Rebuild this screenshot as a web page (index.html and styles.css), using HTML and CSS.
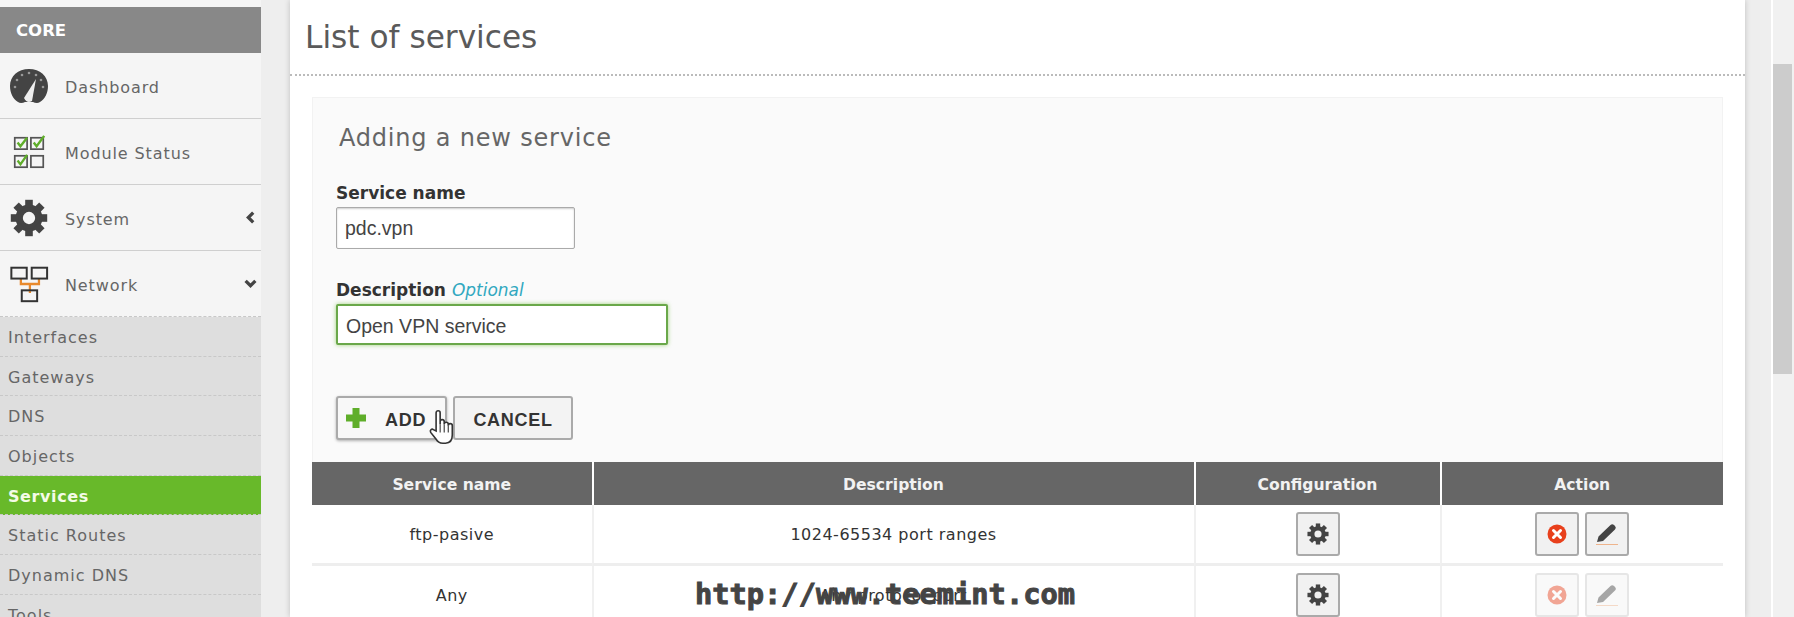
FILE: index.html
```html
<!DOCTYPE html>
<html>
<head>
  <title>List of services</title>
  <link rel="stylesheet" href="styles.css">
</head>
<body>
  <svg class="defs" width="0" height="0">
    <symbol id="gear" viewBox="0 0 24 24">
      <circle cx="12" cy="12" r="6.200" fill="none" stroke="currentColor" stroke-width="4.600"/>
      <g fill="currentColor">
        <rect x="9.600" y="0.500" width="4.800" height="5"/>
        <rect x="9.600" y="0.500" width="4.800" height="5" transform="rotate(45 12 12)"/>
        <rect x="9.600" y="0.500" width="4.800" height="5" transform="rotate(90 12 12)"/>
        <rect x="9.600" y="0.500" width="4.800" height="5" transform="rotate(135 12 12)"/>
        <rect x="9.600" y="0.500" width="4.800" height="5" transform="rotate(180 12 12)"/>
        <rect x="9.600" y="0.500" width="4.800" height="5" transform="rotate(225 12 12)"/>
        <rect x="9.600" y="0.500" width="4.800" height="5" transform="rotate(270 12 12)"/>
        <rect x="9.600" y="0.500" width="4.800" height="5" transform="rotate(315 12 12)"/>
      </g>
    </symbol>
    <symbol id="del" viewBox="0 0 20 20">
      <circle cx="10" cy="10" r="9.500" fill="#e8401c"/>
      <path d="M6.500 6.500l7 7M13.500 6.500l-7 7" stroke="#fff" stroke-width="3" stroke-linecap="round"/>
    </symbol>
    <symbol id="pencil" viewBox="0 0 24 24">
      <path d="M2 20l1.500-5.500L15.500 3a2.500 2.500 0 0 1 3.500 0l1 1a2.500 2.500 0 0 1 0 3.500L8 19z" fill="#444"/>
      <path d="M1 22.500h22" stroke="#eeb48c" stroke-width="1"/>
    </symbol>
  </svg>

  <aside class="sidebar">
    <div class="side-title">CORE</div>
    <a class="side-item">
      <svg class="side-icon" viewBox="0 0 40 36">
        <path d="M20 1C9 1 1 8 1 18c0 7 3 13 8 16 2 1.500 5 1 7 0h8c2 1 5 1.500 7 0 5-3 8-9 8-16C39 8 31 1 20 1z" fill="#444"/>
        <path d="M15 30l12-19-4 22q-5 3-8-3z" fill="#eee"/>
        <g fill="#999">
          <circle cx="6" cy="19" r="1.300"/><circle cx="8" cy="12" r="1.300"/><circle cx="13" cy="7" r="1.300"/>
          <circle cx="20" cy="5" r="1.300"/><circle cx="27" cy="7" r="1.300"/><circle cx="32" cy="12" r="1.300"/><circle cx="34" cy="19" r="1.300"/>
        </g>
      </svg>
      <span>Dashboard</span>
    </a>
    <a class="side-item">
      <svg class="side-icon" viewBox="0 0 40 40">
        <g fill="none" stroke="#555" stroke-width="1.800">
          <rect x="5" y="5" width="13" height="12"/><rect x="22" y="5" width="13" height="12"/>
          <rect x="5" y="24" width="13" height="12"/><rect x="22" y="24" width="13" height="12"/>
        </g>
        <path d="M8 10l3 4 7-9M25 10l3 4 8-11M8 29l3 4 7-10" fill="none" stroke="#5fae2a" stroke-width="2.500"/>
      </svg>
      <span>Module Status</span>
    </a>
    <a class="side-item">
      <svg class="side-icon gear-big"><use href="#gear"/></svg>
      <span>System</span>
      <svg class="chev" viewBox="0 0 12 12"><path d="M8.500 1.500L4 6l4.500 4.500" fill="none" stroke="#444" stroke-width="3"/></svg>
    </a>
    <a class="side-item last">
      <svg class="side-icon" viewBox="0 0 42 42">
        <path d="M12 15v6h20v-6M22 21v10" fill="none" stroke="#e8892c" stroke-width="2.500"/>
        <g fill="none" stroke="#333" stroke-width="2.200">
          <rect x="1.500" y="3" width="17" height="12"/><rect x="24" y="3" width="17" height="12"/>
          <rect x="13" y="28" width="17" height="12"/>
        </g>
      </svg>
      <span>Network</span>
      <svg class="chev" viewBox="0 0 12 12"><path d="M1.500 3.500L6 8l4.500-4.500" fill="none" stroke="#444" stroke-width="3"/></svg>
    </a>
    <ul class="side-sub">
      <li>Interfaces</li>
      <li>Gateways</li>
      <li>DNS</li>
      <li>Objects</li>
      <li class="active">Services</li>
      <li>Static Routes</li>
      <li>Dynamic DNS</li>
      <li>Tools</li>
    </ul>
  </aside>

  <main class="panel">
    <h1 class="page-title">List of services</h1>
    <div class="page-body">
      <form class="add-form">
        <h2>Adding a new service</h2>
        <label class="field-label">Service name</label>
        <div class="input name-input">pdc.vpn</div>
        <label class="field-label desc-label">Description <em>Optional</em></label>
        <div class="input desc-input">Open VPN service</div>
        <div class="form-buttons">
          <button type="button" class="btn add-btn">
            <svg class="plus" viewBox="0 0 20 20"><path d="M6.500 0h7v6.500H20v7h-6.500V20h-7v-6.500H0v-7h6.500z" fill="#5fae2a"/></svg>
            ADD
          </button>
          <button type="button" class="btn cancel-btn">CANCEL</button>
        </div>
      </form>
      <table class="services">
        <thead>
          <tr>
            <th class="col-name">Service name</th>
            <th class="col-desc">Description</th>
            <th class="col-conf">Configuration</th>
            <th>Action</th>
          </tr>
        </thead>
        <tbody>
          <tr>
            <td>ftp-pasive</td>
            <td>1024-65534 port ranges</td>
            <td><span class="icon-btn"><svg class="i-gear"><use href="#gear"/></svg></span></td>
            <td>
              <span class="icon-btn"><svg class="i-del"><use href="#del"/></svg></span>
              <span class="icon-btn"><svg class="i-pencil"><use href="#pencil"/></svg></span>
            </td>
          </tr>
          <tr>
            <td>Any</td>
            <td>Any protocol port</td>
            <td><span class="icon-btn"><svg class="i-gear"><use href="#gear"/></svg></span></td>
            <td>
              <span class="icon-btn off"><svg class="i-del"><use href="#del"/></svg></span>
              <span class="icon-btn off"><svg class="i-pencil"><use href="#pencil"/></svg></span>
            </td>
          </tr>
        </tbody>
      </table>
    </div>
  </main>

  <div class="scrollbar"><div class="thumb"></div></div>

  <svg class="cursor" viewBox="0 0 20 28">
    <path d="M6 17V3.500a1.500 1.500 0 0 1 3 0V12V10a1.500 1.500 0 0 1 3 0v2a1.500 1.500 0 0 1 3 0v1a1.500 1.500 0 0 1 3 0v7c0 4-2 6-5 6h-2c-3 0-4-1-5-3l-4-5c-1-2 1-3 2-2z" fill="#fff" stroke="#333" stroke-width="1.200"/>
    <path d="M9 12v6M12 12v6M15 13v5" stroke="#333" stroke-width="0.800"/>
  </svg>
  <div class="watermark">http://www.teemint.com</div>
</body>
</html>
```

FILE: styles.css
```css
html, body {
  margin: 0;
  padding: 0;
  height: 100%;
}

body {
  display: flex;
  height: 617px;
  overflow: hidden;
  background-color: #eeeeee;
  font-family: "DejaVu Sans", Verdana, sans-serif;
  color: #333;
  position: relative;
}

.defs {
  position: absolute;
}

/* sidebar */
.sidebar {
  width: 261px;
  flex: none;
  padding-top: 7px;
  background-color: #f5f5f5;
}

.side-title {
  height: 46px;
  line-height: 47px;
  padding-left: 16px;
  background-color: #888888;
  color: #fff;
  font-size: 16.500px;
  font-weight: bold;
}

.side-item {
  display: flex;
  align-items: center;
  height: 65px;
  border-bottom: 1px solid #cfcfcf;
  color: #666;
  font-size: 16px;
  letter-spacing: 0.9px;
}

.side-item span {
  padding-top: 3px;
}

.side-item.last {
  border-bottom: 1px dashed #c8c8c8;
}

.side-icon {
  width: 40px;
  height: 38px;
  margin-left: 9px;
  margin-right: 16px;
  flex: none;
}

.gear-big {
  color: #444;
}

.chev {
  width: 13px;
  height: 13px;
  margin-left: auto;
  margin-right: 4px;
}

.side-sub {
  list-style: none;
  margin: 0;
  padding: 0;
  background-color: #dedede;
}

.side-sub li {
  box-sizing: border-box;
  height: 39.700px;
  line-height: 42px;
  padding-left: 8px;
  border-bottom: 1px dashed #c8c8c8;
  color: #666;
  font-size: 16px;
  letter-spacing: 1px;
}

.side-sub li.active {
  background-color: #68b92a;
  color: #f4fbe8;
  font-weight: bold;
  letter-spacing: 0.6px;
}

/* main panel */
.panel {
  width: 1455px;
  flex: none;
  margin-left: 29px;
  background-color: #fff;
  box-shadow: 0 0 6px rgba(0, 0, 0, 0.2);
}

.page-title {
  height: 74px;
  margin: 0;
  padding-left: 15px;
  line-height: 74px;
  font-size: 31.200px;
  font-weight: normal;
  color: #5a5a5a;
  border-bottom: 2px dotted #bbb;
}

.page-body {
  padding: 21px 22px 0 22px;
}

.add-form {
  height: 365px;
  padding: 25px 23px 0;
  box-sizing: border-box;
  background-color: #fafafa;
  border: 1px solid #f2f2f2;
  border-bottom: none;
}

.add-form h2 {
  margin: 0 0 30px 3px;
  font-size: 24px;
  letter-spacing: 0.8px;
  font-weight: normal;
  color: #666;
  line-height: 30px;
}

.field-label {
  display: block;
  font-size: 17px;
  font-weight: bold;
  color: #333;
  line-height: 20px;
}

.field-label em {
  font-weight: normal;
  color: #31a8c0;
}

.desc-label {
  margin-top: 31px;
}

.input {
  box-sizing: border-box;
  margin-top: 4px;
  padding-left: 8px;
  background-color: #fff;
  border: 1px solid #aaa;
  border-radius: 2px;
  font-family: "Liberation Sans", Arial, sans-serif;
  font-size: 19.500px;
  color: #444;
}

.name-input {
  width: 239px;
  height: 42px;
  line-height: 40px;
  box-shadow: inset 0 1px 2px rgba(0, 0, 0, 0.2);
}

.desc-input {
  width: 332px;
  height: 41px;
  line-height: 41px;
  border: 2px solid #6aa84a;
  box-shadow: 0 0 4px rgba(104, 185, 42, 0.6);
}

.form-buttons {
  display: flex;
  gap: 6px;
  margin-top: 51px;
}

.btn {
  display: flex;
  align-items: center;
  height: 44px;
  padding: 4px 0 0;
  background-color: #f3f3f3;
  border: 2px solid #aaa;
  border-radius: 3px;
  font-family: "Liberation Sans", Arial, sans-serif;
  font-size: 18px;
  font-weight: bold;
  letter-spacing: 0.7px;
  color: #333;
}

.add-btn {
  width: 111px;
  padding-left: 8px;
  background-color: #f8f8f8;
  box-shadow: 0 1px 3px rgba(0, 0, 0, 0.3);
}

.cancel-btn {
  width: 120px;
  justify-content: center;
}

.plus {
  width: 20px;
  height: 20px;
  margin-right: 19px;
  margin-top: -4px;
}

/* table */
.services {
  width: 100%;
  table-layout: fixed;
  border-collapse: separate;
  border-spacing: 0;
  font-size: 16px;
  letter-spacing: 0.5px;
}

.services th {
  height: 43px;
  padding: 2px 0 0;
  box-sizing: border-box;
  background-color: #666666;
  color: #f2f2f2;
  font-size: 15.600px;
  letter-spacing: 0;
  font-weight: bold;
  border-left: 2px solid #fff;
}

.services th:first-child,
.services td:first-child {
  border-left: none;
}

.col-name { width: 279.500px; }
.col-desc { width: 602px; }
.col-conf { width: 246px; }

.services td {
  height: 58px;
  padding: 0;
  text-align: center;
  border-left: 2px solid #f0f0f0;
  border-bottom: 3px solid #eeeeee;
  color: #333;
}

.icon-btn {
  display: inline-flex;
  align-items: center;
  justify-content: center;
  box-sizing: border-box;
  width: 44px;
  height: 44px;
  vertical-align: middle;
  background-color: #f1f1f1;
  border: 2px solid #aaa;
  border-radius: 3px;
}

.icon-btn.off {
  border-color: #e6e6e6;
  background-color: #f9f9f9;
}

.icon-btn.off svg {
  opacity: 0.45;
}

.i-gear {
  width: 22px;
  height: 22px;
  color: #444;
}

.i-del {
  width: 20px;
  height: 20px;
}

.i-pencil {
  width: 24px;
  height: 24px;
}

/* scrollbar */
.scrollbar {
  width: 23px;
  flex: none;
  margin-left: 26px;
  box-sizing: border-box;
  border-left: 2px solid #fff;
  padding: 64px 2px 0 0;
  background-color: #f1f1f1;
}

.thumb {
  height: 310px;
  background-color: #cccccc;
}

/* things on top of the page */
.watermark {
  position: absolute;
  left: 695px;
  top: 575px;
  font-family: "DejaVu Sans Mono", monospace;
  font-size: 28.700px;
  font-weight: bold;
  line-height: 38px;
  -webkit-text-stroke: 1px #444;
  color: #444;
}

.cursor {
  position: absolute;
  left: 428px;
  top: 408px;
  width: 27px;
  height: 38px;
}
```
